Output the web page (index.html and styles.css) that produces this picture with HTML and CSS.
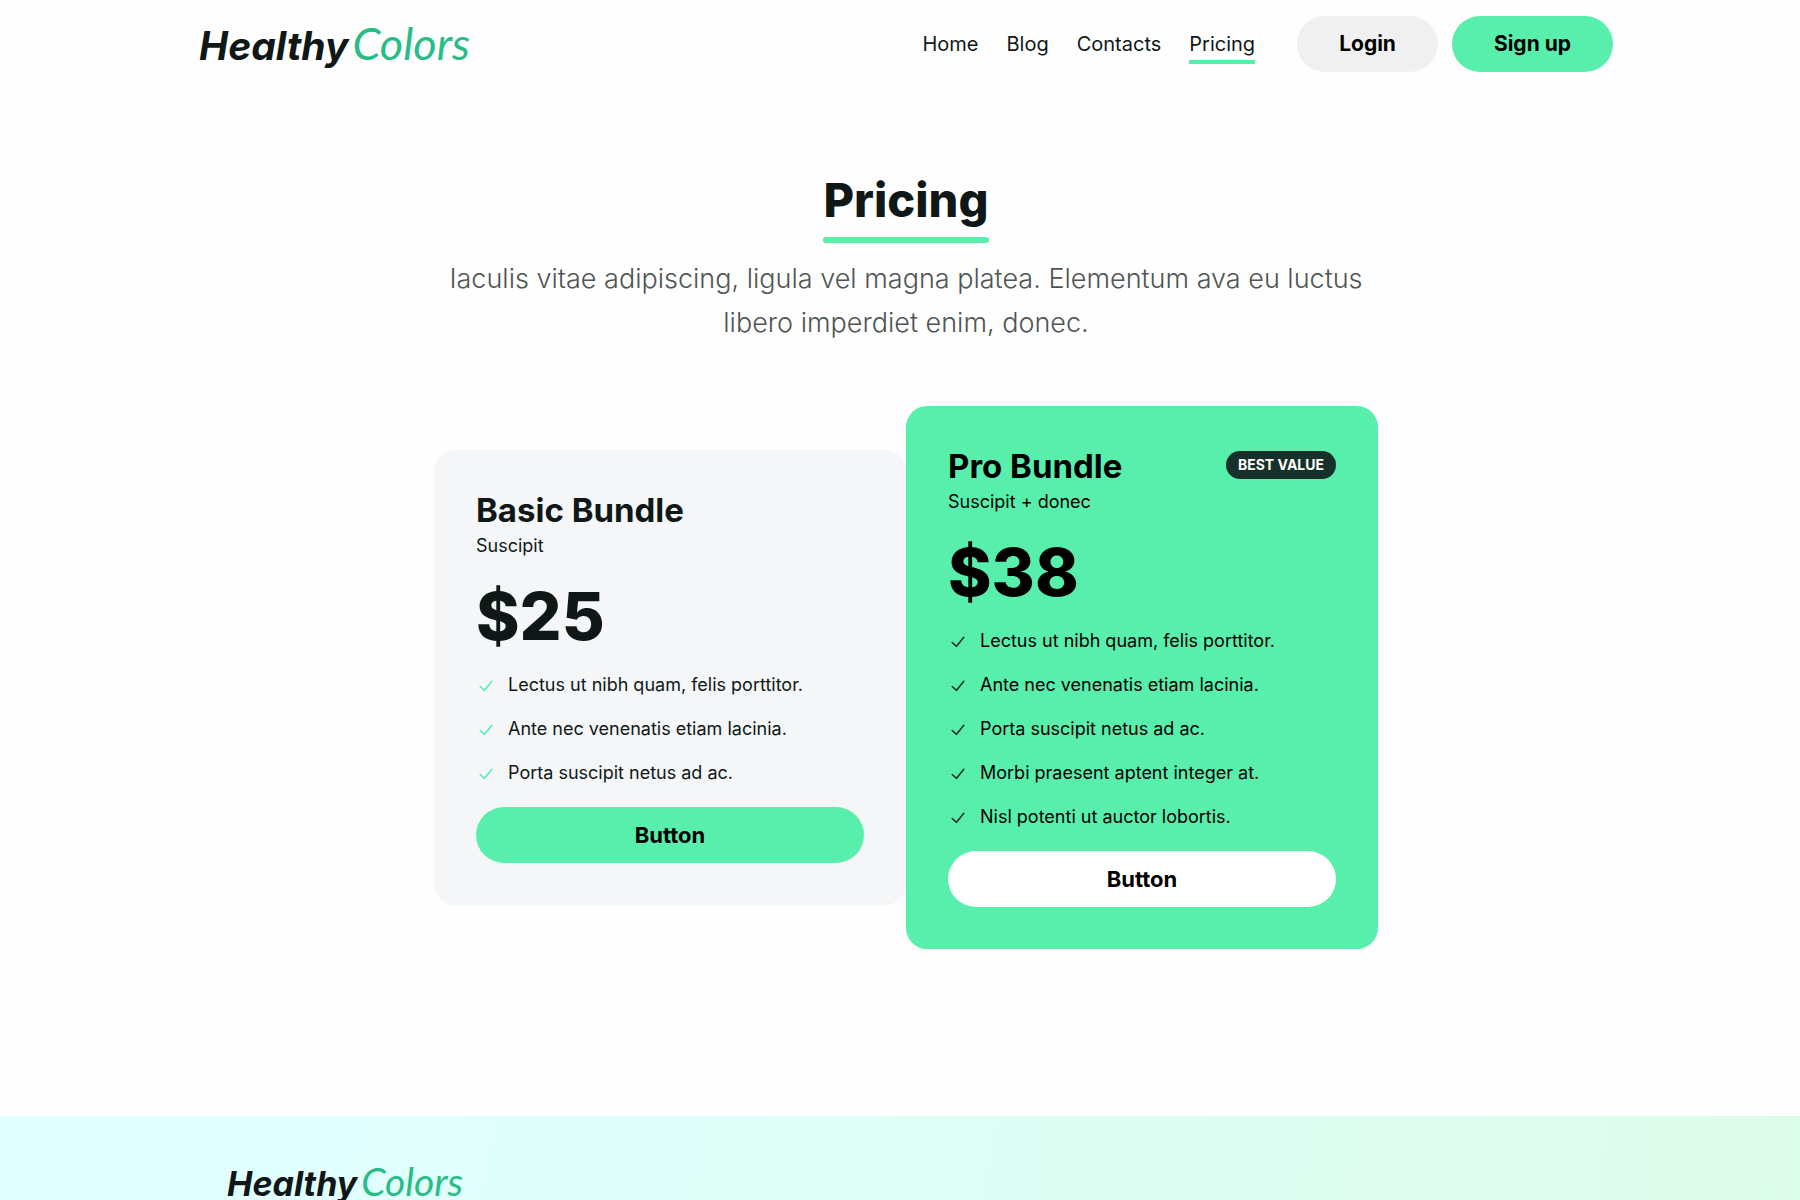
FILE: index.html
```
<!DOCTYPE html>
<html lang="en">
<head>
  <meta charset="utf-8">
  <meta name="viewport" content="width=device-width, initial-scale=1">
  <title>Pricing – Healthy Colors</title>
  <link rel="stylesheet" href="styles.css">
</head>
<body>
  <svg class="sprite" aria-hidden="true">
    <symbol id="check" viewBox="0 0 20 20">
      <path d="M4.200 11.500L8.500 15.300L15.800 6.300" fill="none" stroke="currentColor" stroke-width="1.600" stroke-linecap="round" stroke-linejoin="round"/>
    </symbol>
  </svg>

  <header class="header">
    <div class="container header-row">
      <a class="logo" href="#"><span class="logo-main">Healthy</span><span class="logo-script">Colors</span></a>
      <nav class="nav">
        <a class="nav-link" href="#">Home</a>
        <a class="nav-link" href="#">Blog</a>
        <a class="nav-link" href="#">Contacts</a>
        <a class="nav-link nav-link-active" href="#">Pricing</a>
      </nav>
      <div class="header-actions">
        <button class="button button-muted" type="button">Login</button>
        <button class="button button-primary" type="button">Sign up</button>
      </div>
    </div>
  </header>

  <main class="main">
    <section class="intro">
      <h1 class="intro-title">Pricing</h1>
      <p class="intro-text">Iaculis vitae adipiscing, ligula vel magna platea. Elementum ava eu luctus libero imperdiet enim, donec.</p>
    </section>

    <section class="plans">
      <article class="plan plan-basic">
        <div class="plan-head">
          <h2 class="plan-title">Basic Bundle</h2>
        </div>
        <p class="plan-subtitle">Suscipit</p>
        <p class="plan-price">$25</p>
        <ul class="plan-list">
          <li class="plan-item"><svg class="check"><use href="#check"/></svg>Lectus ut nibh quam, felis porttitor.</li>
          <li class="plan-item"><svg class="check"><use href="#check"/></svg>Ante nec venenatis etiam lacinia.</li>
          <li class="plan-item"><svg class="check"><use href="#check"/></svg>Porta suscipit netus ad ac.</li>
        </ul>
        <button class="button button-wide button-primary" type="button">Button</button>
      </article>

      <article class="plan plan-pro">
        <div class="plan-head">
          <h2 class="plan-title">Pro Bundle</h2>
          <span class="badge">BEST VALUE</span>
        </div>
        <p class="plan-subtitle">Suscipit + donec</p>
        <p class="plan-price">$38</p>
        <ul class="plan-list">
          <li class="plan-item"><svg class="check"><use href="#check"/></svg>Lectus ut nibh quam, felis porttitor.</li>
          <li class="plan-item"><svg class="check"><use href="#check"/></svg>Ante nec venenatis etiam lacinia.</li>
          <li class="plan-item"><svg class="check"><use href="#check"/></svg>Porta suscipit netus ad ac.</li>
          <li class="plan-item"><svg class="check"><use href="#check"/></svg>Morbi praesent aptent integer at.</li>
          <li class="plan-item"><svg class="check"><use href="#check"/></svg>Nisl potenti ut auctor lobortis.</li>
        </ul>
        <button class="button button-wide button-white" type="button">Button</button>
      </article>
    </section>
  </main>

  <footer class="footer">
    <div class="container footer-row">
      <a class="logo logo-small" href="#"><span class="logo-main">Healthy</span><span class="logo-script">Colors</span></a>
    </div>
  </footer>
</body>
</html>
```
FILE: styles.css
```
* {
  box-sizing: border-box;
}

body {
  margin: 0;
  background: #fefefe;
  color: #101817;
  font-family: Inter, "Liberation Sans", sans-serif;
  font-size: 18px;
  line-height: 28px;
}

h1, h2, p, ul {
  margin: 0;
  padding: 0;
}

.sprite {
  display: none;
}

.header, .main, .footer {
  padding-left: 12px;
}

.container {
  max-width: 1414px;
  margin: 0 auto;
}

.header-row {
  display: flex;
  align-items: center;
  min-height: 88px;
}

.logo {
  display: flex;
  align-items: baseline;
  gap: 4px;
  margin-right: auto;
  font-style: italic;
  font-size: 39px;
  line-height: 56px;
  color: #101817;
  text-decoration: none;
}

.logo-main {
  font-weight: 700;
}

.logo-script {
  font-family: Lato, "Liberation Sans", sans-serif;
  font-size: 45px;
  color: #27bd85;
}

.nav {
  display: flex;
  gap: 28px;
  margin-right: 42px;
}

.nav-link {
  padding-top: 4px;
  border-bottom: 4px solid transparent;
  font-size: 20px;
  line-height: 32px;
  color: #101817;
  text-decoration: none;
}

.nav-link-active {
  border-color: #58efad;
}

.header-actions {
  display: flex;
  gap: 14px;
}

.button {
  height: 56px;
  padding: 0 42px;
  border: 0;
  border-radius: 28px;
  font: inherit;
  font-size: 21px;
  font-weight: 700;
  color: #000;
  cursor: pointer;
}

.button-muted {
  background: #f0f0f0;
}

.button-primary {
  background: #58efad;
}

.button-white {
  background: #fff;
}

.button-wide {
  width: 100%;
  font-size: 22px;
}

.main {
  padding-top: 84px;
  padding-bottom: 167px;
}

.intro {
  display: flex;
  flex-direction: column;
  align-items: center;
  margin-bottom: 61px;
  text-align: center;
}

.intro-title {
  margin-bottom: 14px;
  font-size: 47px;
  line-height: 56px;
  font-weight: 800;
}

.intro-title::after {
  content: "";
  display: block;
  height: 6px;
  margin-top: 9px;
  border-radius: 3px;
  background: #58efad;
}

.intro-text {
  max-width: 944px;
  font-size: 27px;
  line-height: 44px;
  font-weight: 300;
  color: #4f5554;
}

.plans {
  display: grid;
  grid-template-columns: 1fr 1fr;
  align-items: center;
  max-width: 944px;
  margin: 0 auto;
}

.plan {
  padding: 42px;
  border-radius: 21px;
}

.plan-basic {
  background: #f4f6f7;
}

.plan-pro {
  background: #58efad;
  color: #000;
}

.plan-head {
  display: flex;
  justify-content: space-between;
  align-items: flex-start;
  margin-bottom: 4px;
}

.plan-title {
  font-size: 33px;
  line-height: 36px;
  font-weight: 700;
}

.badge {
  margin-top: 3px;
  padding: 0 12px;
  border-radius: 14px;
  background: #17302a;
  color: #fff;
  font-size: 14px;
  font-weight: 700;
}

.plan-price {
  margin: 20px 0 19px;
  font-size: 66px;
  line-height: 72px;
  font-weight: 800;
}

.plan-list {
  display: grid;
  gap: 16px;
  margin-bottom: 20px;
  list-style: none;
}

.plan-item {
  display: flex;
  align-items: center;
  gap: 12px;
}

.check {
  width: 20px;
  height: 20px;
}

.plan-basic .check {
  color: #58efad;
}

.plan-pro .check {
  color: #17302a;
}

.footer {
  background: linear-gradient(100deg, #e0fffe 20%, #dcfcea);
}

.footer-row {
  padding: 37px 28px;
}

.logo-small {
  font-size: 34px;
}

.logo-small .logo-script {
  font-size: 39px;
}
```
